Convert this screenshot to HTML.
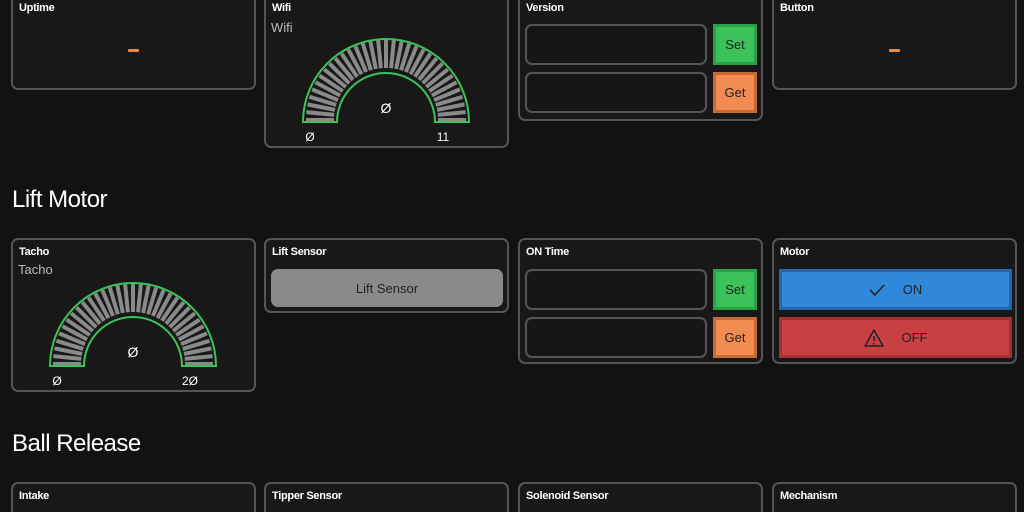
<!DOCTYPE html>
<html><head><meta charset="utf-8"><style>
*{box-sizing:border-box;margin:0;padding:0}
html{width:1024px;height:512px;overflow:hidden;background:#121212}
body{width:1024px;height:512px;background:#121212;color:#eee;font-family:"Liberation Sans",sans-serif;position:relative;overflow:hidden}
.c{position:absolute;background:#181818;border:2px solid #555;border-radius:7px;width:245px}
.t{position:absolute;left:6px;top:6px;font-size:11px;font-weight:bold;color:#fff;letter-spacing:-0.3px}
.s{position:absolute;left:5px;top:22px;font-size:13px;color:#bbb}
.dash{position:absolute;width:11px;height:3px;background:#f08a40;border-radius:1px}
.in{position:absolute;left:5px;width:182px;height:41px;border:2px solid #555;border-radius:7px;background:#161616}
.b{position:absolute;left:193px;width:44px;height:41px;display:flex;align-items:center;justify-content:center;font-size:13px;color:#222}
.g{background:#3bc35a;border:3px solid #2d9f47}
.o{background:#f28b52;border:3px solid #c96a35}
h2{position:absolute;left:12px;font-size:24px;font-weight:normal;color:#fff;letter-spacing:-0.5px}
.big{position:absolute;left:5px;width:233px;height:41px;display:flex;align-items:center;justify-content:center;font-size:13px;color:#222;gap:18px}
svg text{font-family:"Liberation Sans",sans-serif}
.r3{top:482px;height:30px;border-bottom:none;border-radius:7px 7px 0 0}
</style></head><body>
<div class="c" style="left:11px;top:-10px;height:100px"><div class="t" style="top:10px">Uptime</div><div class="dash" style="left:115px;top:57px"></div></div>
<div class="c" style="left:264px;top:-10px;height:158px"><div class="t" style="top:10px">Wifi</div><div class="s" style="top:28px">Wifi</div>
<svg id="g1" style="position:absolute;left:0;top:0" width="241" height="154"></svg></div>
<div class="c" style="left:518px;top:-10px;height:131px"><div class="t" style="top:10px">Version</div>
<div class="in" style="top:32px"></div><div class="b g" style="top:32px">Set</div>
<div class="in" style="top:80px"></div><div class="b o" style="top:80px">Get</div></div>
<div class="c" style="left:772px;top:-10px;height:100px"><div class="t" style="top:10px">Button</div><div class="dash" style="left:115px;top:57px"></div></div>

<h2 style="top:186px">Lift Motor</h2>
<div class="c" style="left:11px;top:238px;height:154px"><div class="t">Tacho</div><div class="s">Tacho</div>
<svg id="g2" style="position:absolute;left:0;top:0" width="241" height="150"></svg></div>
<div class="c" style="left:264px;top:238px;height:75px"><div class="t">Lift Sensor</div>
<div style="position:absolute;left:5px;top:29px;width:232px;height:38px;background:#8a8a8a;border-radius:7px;display:flex;align-items:center;justify-content:center;font-size:13px;color:#222">Lift Sensor</div></div>
<div class="c" style="left:518px;top:238px;height:126px"><div class="t">ON Time</div>
<div class="in" style="top:29px"></div><div class="b g" style="top:29px">Set</div>
<div class="in" style="top:77px"></div><div class="b o" style="top:77px">Get</div></div>
<div class="c" style="left:772px;top:238px;height:126px"><div class="t">Motor</div>
<div class="big" style="top:29px;background:#3088db;border:3px solid #2566a8"><svg width="16" height="12"><path d="M1 6l5 5 9-10" stroke="#222" stroke-width="1.6" fill="none"/></svg>ON</div>
<div class="big" style="top:77px;background:#c94043;border:3px solid #a52f32"><svg width="20" height="18"><path d="M10 1L19 17H1Z" stroke="#222" stroke-width="1.5" fill="none" stroke-linejoin="round"/><path d="M10 7v5M10 14v1.5" stroke="#222" stroke-width="1.5"/></svg>OFF</div></div>

<h2 style="top:430px">Ball Release</h2>
<div class="c r3" style="left:11px"><div class="t">Intake</div></div>
<div class="c r3" style="left:264px"><div class="t">Tipper Sensor</div></div>
<div class="c r3" style="left:518px"><div class="t">Solenoid Sensor</div></div>
<div class="c r3" style="left:772px"><div class="t">Mechanism</div></div>
<script>
function gauge(id,cx,cy,lo,hi){
 var s=document.getElementById(id),h='';
 var R=83,r=49,n=32;
 for(var i=0;i<=n;i++){var a=Math.PI*i/n,c=Math.cos(a),si=Math.sin(a);
  h+='<line x1="'+(cx-c*(r+3))+'" y1="'+(cy-2-si*(r+3))+'" x2="'+(cx-c*(R-3))+'" y2="'+(cy-2-si*(R-3))+'" stroke="#8a8a8a" stroke-width="4"/>';}
 h+='<path d="M'+(cx-R)+' '+cy+'A'+R+' '+R+' 0 0 1 '+(cx+R)+' '+cy+'H'+(cx+r)+'A'+r+' '+r+' 0 0 0 '+(cx-r)+' '+cy+'Z" fill="none" stroke="#3bc35a" stroke-width="2"/>';
 h+='<text x="'+cx+'" y="'+(cy-9)+'" fill="#fff" font-size="14" text-anchor="middle">Ø</text>';
 h+='<text x="'+(cx-76)+'" y="'+(cy+19)+'" fill="#fff" font-size="12" text-anchor="middle">'+lo+'</text>';
 h+='<text x="'+(cx+57)+'" y="'+(cy+19)+'" fill="#fff" font-size="12" text-anchor="middle">'+hi+'</text>';
 s.innerHTML=h;}
gauge('g1',120,130,'Ø','11');
gauge('g2',120,126,'Ø','2Ø');
</script>
</body></html>
